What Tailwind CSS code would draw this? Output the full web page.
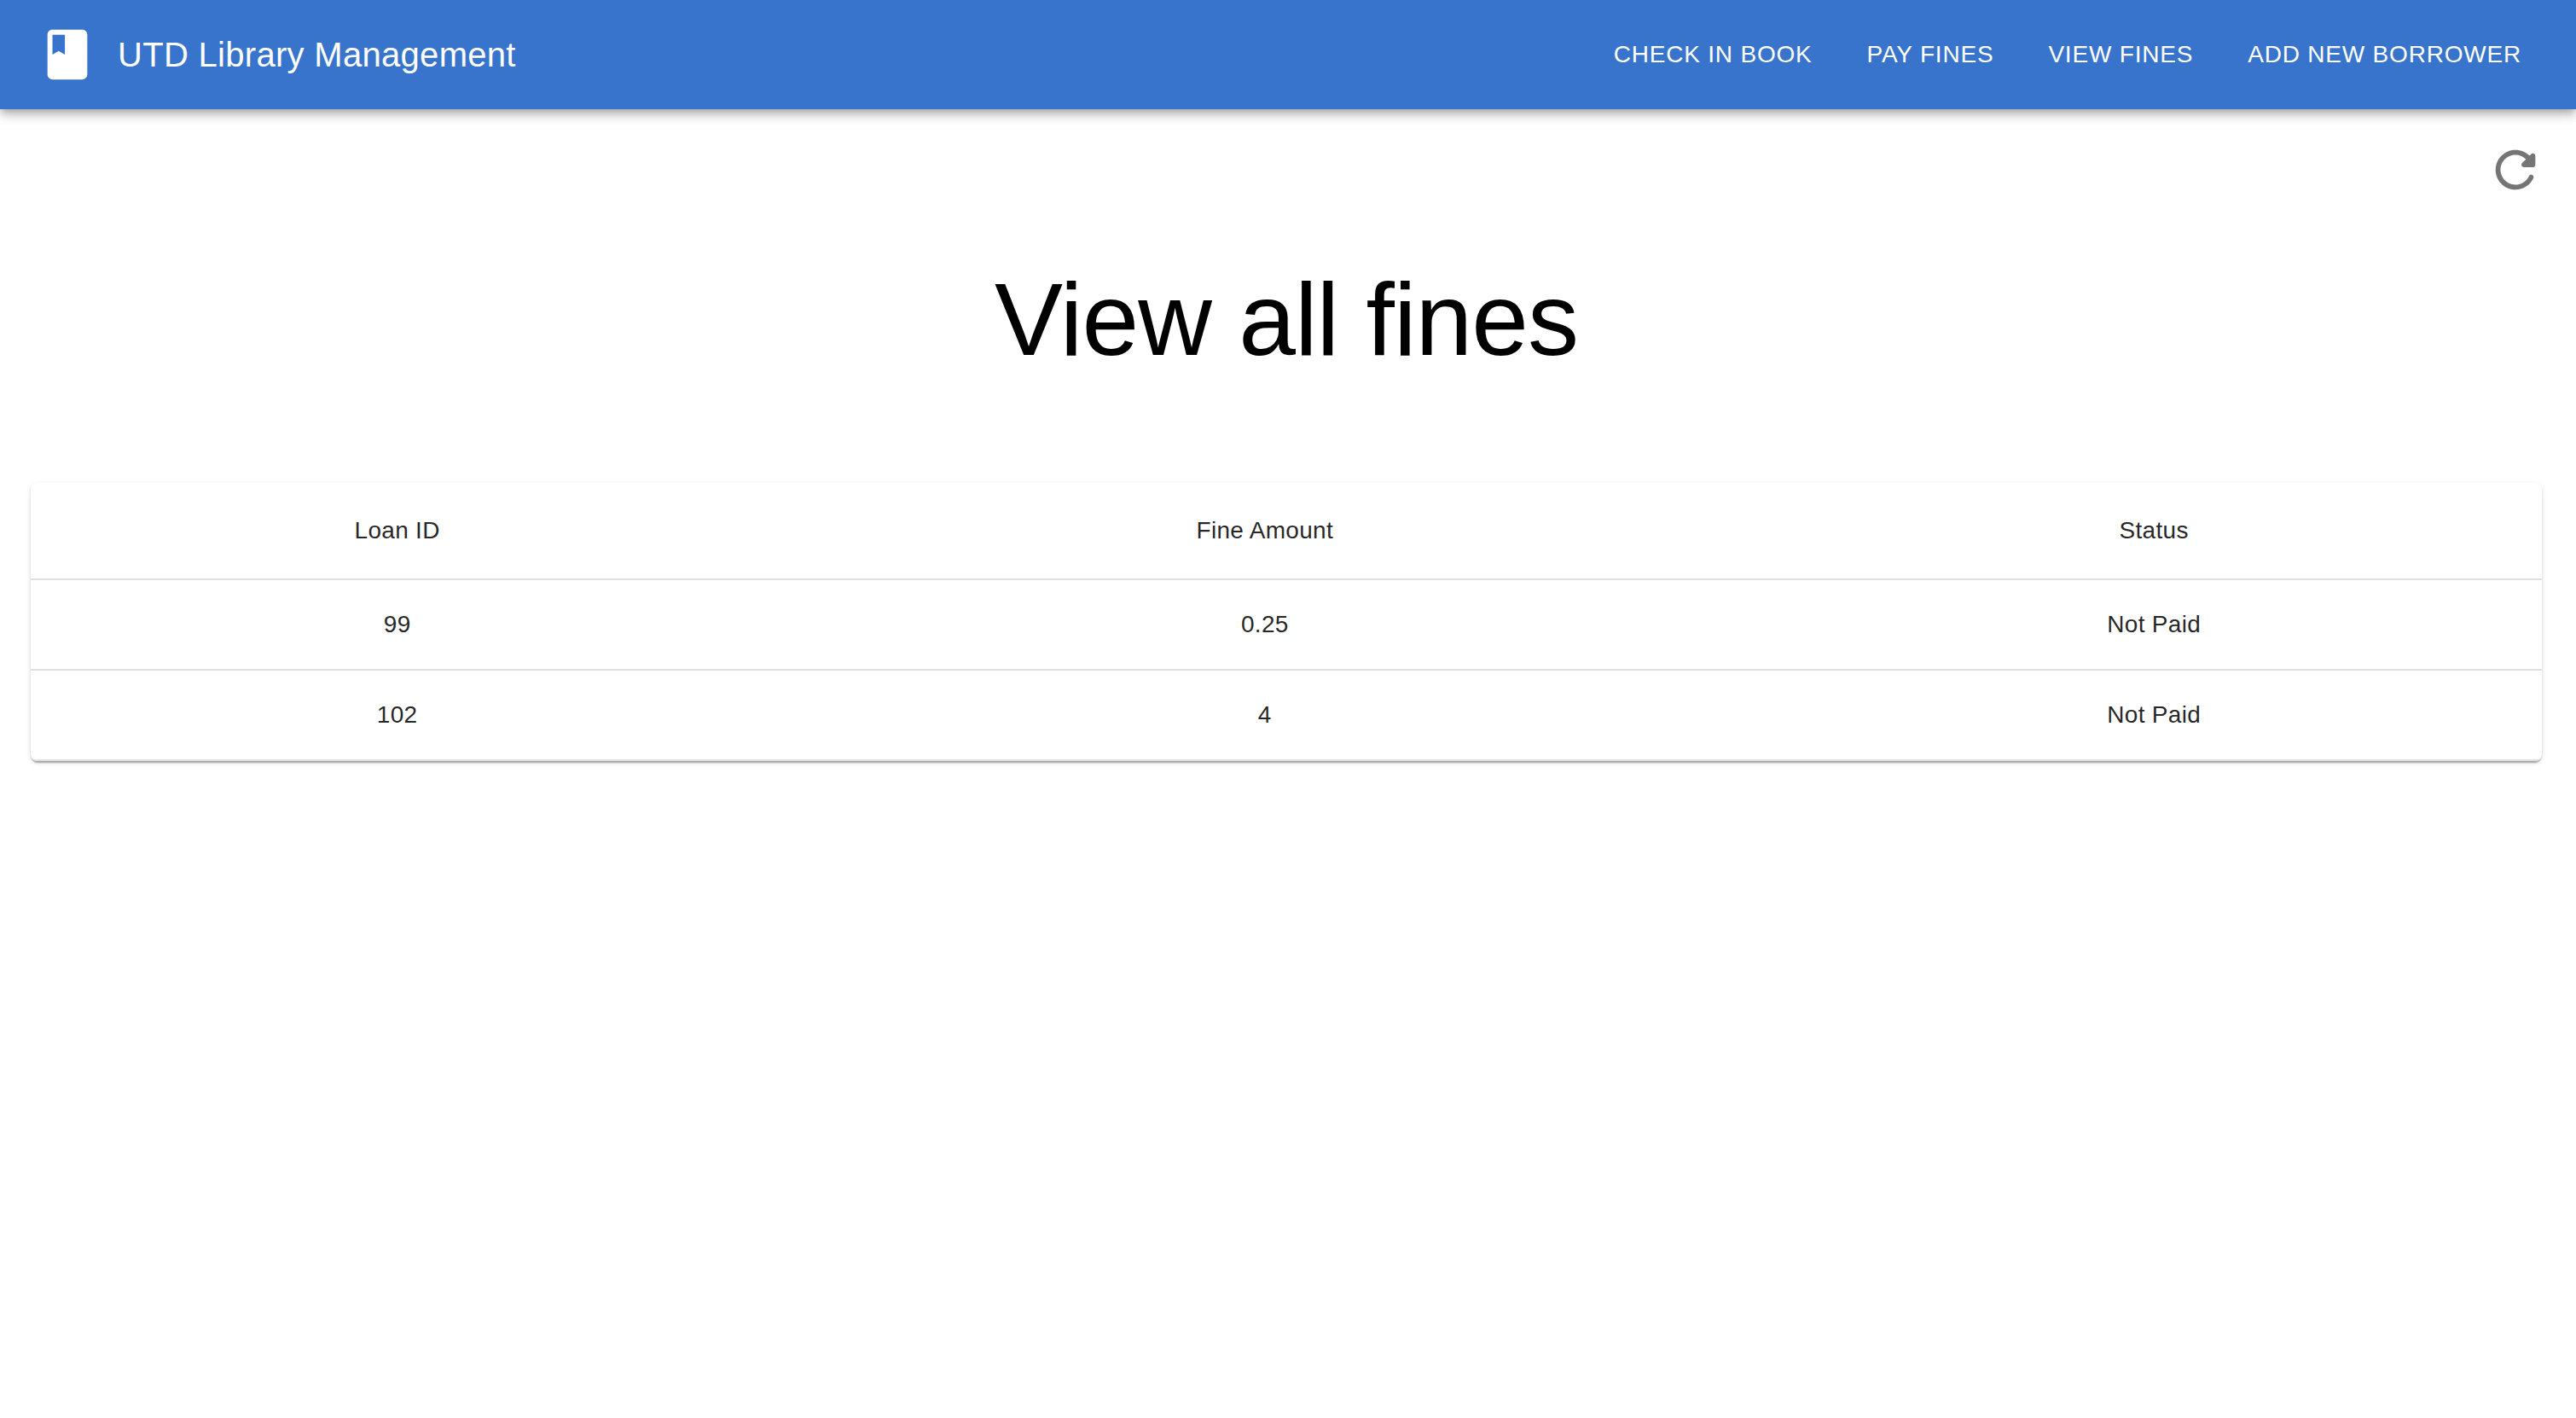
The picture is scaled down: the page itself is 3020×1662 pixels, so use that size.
<!DOCTYPE html>
<html lang="en">
<head>
<meta charset="utf-8">
<meta name="viewport" content="width=device-width, initial-scale=1">
<title>UTD Library Management</title>
<script src="https://cdn.jsdelivr.net/npm/@tailwindcss/browser@4"></script>
</head>
<body class="min-h-screen bg-white font-['Liberation_Sans',Arial,sans-serif] text-black">
<header class="relative flex h-32 items-center justify-between bg-[#3874cb] pr-8 pl-11 text-white shadow-[0_4px_8px_-2px_rgb(0_0_0/0.2),0_8px_10px_0_rgb(0_0_0/0.14),0_2px_20px_0_rgb(0_0_0/0.12)]">
  <a href="#" class="flex items-center gap-6">
    <svg class="size-[70px]" viewBox="0 0 24 24" fill="currentColor" aria-hidden="true"><path d="M18 2H6c-1.1 0-2 .9-2 2v16c0 1.1.9 2 2 2h12c1.1 0 2-.9 2-2V4c0-1.1-.9-2-2-2zM6 4h5v8l-2.5-1.5L6 12V4z"/></svg>
    <span class="text-[40px] leading-16 tracking-[0.0075em]">UTD Library Management</span>
  </a>
  <nav class="flex items-center text-[28px] leading-12 tracking-[0.02857em]">
    <button type="button" class="px-8 py-3 uppercase">Check in book</button>
    <button type="button" class="px-8 py-3 uppercase">Pay fines</button>
    <button type="button" class="px-8 py-3 uppercase">View fines</button>
    <button type="button" class="px-8 py-3 uppercase">Add new borrower</button>
  </nav>
</header>
<main class="pr-10 pl-9">
  <div class="-mr-1 flex justify-end pt-9">
    <button type="button" aria-label="Refresh" class="text-[#757575]">
      <svg class="size-[70px]" viewBox="0 0 24 24" fill="currentColor" aria-hidden="true"><path d="M17.65 6.35c-1.63-1.63-3.94-2.57-6.48-2.31-3.67.37-6.69 3.35-7.1 7.02C3.52 15.91 7.27 20 12 20c3.19 0 5.93-1.87 7.21-4.56.32-.67-.16-1.44-.9-1.44-.37 0-.72.2-.88.53-1.13 2.43-3.84 3.97-6.8 3.31-2.22-.49-4.01-2.3-4.48-4.52C5.31 9.44 8.26 6 12 6c1.66 0 3.14.69 4.22 1.78l-1.51 1.51c-.63.63-.19 1.71.7 1.71H19c.55 0 1-.45 1-1V6.41c0-.89-1.08-1.34-1.71-.71l-.64.65z"/></svg>
    </button>
  </div>
  <h1 class="pt-17 text-center text-[120px] leading-36 tracking-[-1px]">View all fines</h1>
  <div class="mt-30 overflow-hidden rounded-lg bg-white shadow-[0_4px_2px_-2px_rgb(0_0_0/0.2),0_2px_2px_0_rgb(0_0_0/0.14),0_2px_6px_0_rgb(0_0_0/0.12)]">
    <table class="w-full border-separate border-spacing-0 text-center text-[28px] tracking-[0.01071em] text-black/87">
      <thead class="leading-12">
        <tr>
          <th scope="col" class="border-b-2 border-[#e0e0e0] p-8 font-normal">Loan ID</th>
          <th scope="col" class="border-b-2 border-[#e0e0e0] p-8 font-normal">Fine Amount</th>
          <th scope="col" class="border-b-2 border-[#e0e0e0] p-8 font-normal">Status</th>
        </tr>
      </thead>
      <tbody class="leading-10">
        <tr>
          <td class="border-b-2 border-[#e0e0e0] p-8">99</td>
          <td class="border-b-2 border-[#e0e0e0] p-8">0.25</td>
          <td class="border-b-2 border-[#e0e0e0] p-8">Not Paid</td>
        </tr>
        <tr>
          <td class="border-b-2 border-[#e0e0e0] p-8">102</td>
          <td class="border-b-2 border-[#e0e0e0] p-8">4</td>
          <td class="border-b-2 border-[#e0e0e0] p-8">Not Paid</td>
        </tr>
      </tbody>
    </table>
  </div>
</main>
</body>
</html>
